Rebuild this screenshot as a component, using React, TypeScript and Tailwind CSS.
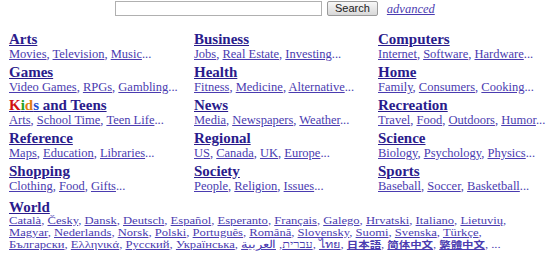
import React from "react";

const cats: { title: React.ReactNode; subs: string[] }[] = [
  { title: "Arts", subs: ["Movies", "Television", "Music"] },
  { title: "Business", subs: ["Jobs", "Real Estate", "Investing"] },
  { title: "Computers", subs: ["Internet", "Software", "Hardware"] },
  { title: "Games", subs: ["Video Games", "RPGs", "Gambling"] },
  { title: "Health", subs: ["Fitness", "Medicine", "Alternative"] },
  { title: "Home", subs: ["Family", "Consumers", "Cooking"] },
  {
    title: (
      <>
        <span className="text-[#d01010]">K</span>
        <span className="text-[#20a020]">i</span>
        <span className="text-[#e08010]">d</span>
        <span className="text-[#2050d0]">s</span> and Teens
      </>
    ),
    subs: ["Arts", "School Time", "Teen Life"],
  },
  { title: "News", subs: ["Media", "Newspapers", "Weather"] },
  { title: "Recreation", subs: ["Travel", "Food", "Outdoors", "Humor"] },
  { title: "Reference", subs: ["Maps", "Education", "Libraries"] },
  { title: "Regional", subs: ["US", "Canada", "UK", "Europe"] },
  { title: "Science", subs: ["Biology", "Psychology", "Physics"] },
  { title: "Shopping", subs: ["Clothing", "Food", "Gifts"] },
  { title: "Society", subs: ["People", "Religion", "Issues"] },
  { title: "Sports", subs: ["Baseball", "Soccer", "Basketball"] },
];

const world: { t: string; cjk?: boolean }[][] = [
  ["Català", "Česky", "Dansk", "Deutsch", "Español", "Esperanto", "Français", "Galego", "Hrvatski", "Italiano", "Lietuvių"].map((t) => ({ t })),
  ["Magyar", "Nederlands", "Norsk", "Polski", "Português", "Română", "Slovensky", "Suomi", "Svenska", "Türkçe"].map((t) => ({ t })),
  [
    { t: "Български" },
    { t: "Ελληνικά" },
    { t: "Русский" },
    { t: "Українська" },
    { t: "עברית" },
    { t: "العربية" },
    { t: "ไทย" },
    { t: "日本語", cjk: true },
    { t: "简体中文", cjk: true },
    { t: "繁體中文", cjk: true },
  ],
];

const serif = { fontFamily: '"Liberation Serif", "Noto Sans CJK JP", serif' };

function Subs({ items }: { items: string[] }) {
  return (
    <div className="text-[12.5px] leading-[14px] text-[#4a3bb0] whitespace-nowrap">
      {items.map((s, i) => (
        <React.Fragment key={i}>
          <a className="underline">{s}</a>
          {i < items.length - 1 ? ", " : "..."}
        </React.Fragment>
      ))}
    </div>
  );
}

export default function App() {
  return (
    <div className="bg-white w-[554px] h-[255px] overflow-hidden" style={serif}>
      <div className="flex items-center h-[16px] pl-[115px] pt-[1px]">
        <input className="w-[207px] h-[15px] border border-[#b0b0b0] bg-white" />
        <button
          className="ml-[5px] h-[15px] px-[7px] text-[11px] leading-[13px] border border-[#9a9a9a] rounded-[2px] bg-gradient-to-b from-[#f8f8f8] to-[#d8d8d8] text-[#222]"
          style={{ fontFamily: '"Liberation Sans", sans-serif' }}
        >
          Search
        </button>
        <a className="ml-[9px] text-[12.5px] leading-[14px] italic underline text-[#4a3bb0]">advanced</a>
      </div>
      <div className="grid grid-cols-[185px_184px_176px] pl-[9px] pt-[16px] gap-y-[4px]">
        {cats.map((c, i) => (
          <div key={i}>
            <div className="text-[15px] leading-[15px] font-bold text-[#2a1b8c] underline">{c.title}</div>
            <Subs items={c.subs} />
          </div>
        ))}
      </div>
      <div className="pl-[9px] pt-[6px]">
        <div className="text-[15px] leading-[16px] font-bold text-[#2a1b8c] underline">World</div>
        {world.map((line, li) => (
          <div key={li} className="text-[10.5px] leading-[12px] text-[#4a3bb0] whitespace-nowrap">
            <span className="inline-block origin-left scale-x-[1.2]">
              {line.map((s, i) => (
                <React.Fragment key={i}>
                  <a className={s.cjk ? "underline text-[9.5px] font-bold" : "underline"}>{s.t}</a>
                  {i < line.length - 1 || li < 2 ? ", " : ", ..."}
                </React.Fragment>
              ))}
            </span>
          </div>
        ))}
      </div>
    </div>
  );
}
